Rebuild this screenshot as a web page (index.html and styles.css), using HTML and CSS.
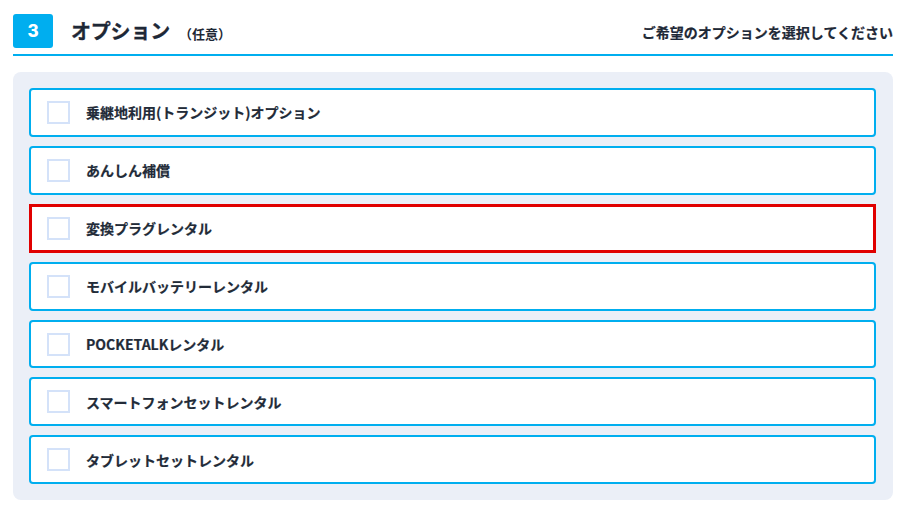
FILE: index.html
```html
<!DOCTYPE html>
<html lang="ja">
<head>
<meta charset="utf-8">
<title>オプション</title>
<link rel="stylesheet" href="styles.css">
</head>
<body>
<section class="step">
  <header class="step-head">
    <div class="step-title">
      <span class="badge">3</span>
      <h2 class="title">オプション</h2>
      <span class="optional">（任意）</span>
    </div>
    <p class="hint">ご希望のオプションを選択してください</p>
  </header>
  <div class="panel">
    <label class="opt"><span class="box"></span><span class="label">乗継地利用(トランジット)オプション</span></label>
    <label class="opt"><span class="box"></span><span class="label">あんしん補償</span></label>
    <label class="opt opt-error"><span class="box"></span><span class="label">変換プラグレンタル</span></label>
    <label class="opt"><span class="box"></span><span class="label">モバイルバッテリーレンタル</span></label>
    <label class="opt"><span class="box"></span><span class="label">POCKETALKレンタル</span></label>
    <label class="opt"><span class="box"></span><span class="label">スマートフォンセットレンタル</span></label>
    <label class="opt"><span class="box"></span><span class="label">タブレットセットレンタル</span></label>
  </div>
</section>
</body>
</html>
```

FILE: styles.css
```css
* { box-sizing: border-box; }
html, body { margin: 0; padding: 0; background: #ffffff; }
body {
  font-family: "Noto Sans CJK JP", "Noto Sans", sans-serif;
  color: #222b38;
}
.step {
  padding: 11px 16px 0 13px;
}
.step-head {
  display: flex;
  align-items: flex-start;
  justify-content: space-between;
  height: 45px;
  border-bottom: 2px solid #00aeef;
}
.step-title {
  display: flex;
  align-items: center;
}
.badge {
  width: 40px;
  height: 34px;
  border-radius: 3px;
  background: #00aeef;
  color: #ffffff;
  font-family: "Inter", "Roboto", sans-serif;
  font-weight: 800;
  font-size: 17px;
  display: flex;
  align-items: center;
  justify-content: center;
}
.title {
  margin: -1px 0 0 18px;
  font-size: 20px;
  font-weight: 700;
  line-height: 34px;
  color: #1e2836;
  letter-spacing: -0.2px;
  -webkit-text-stroke: 0.3px #1e2836;
}
.optional {
  margin: 6px 0 0 9px;
  font-size: 13px;
  font-weight: 700;
  line-height: 34px;
  color: #1e2836;
}
.hint {
  margin: 11px 0 0 0;
  font-size: 14px;
  font-weight: 700;
  line-height: 20px;
  color: #1e2836;
  -webkit-text-stroke: 0.2px #1e2836;
}
.panel {
  margin-top: 16px;
  background: #ebeff7;
  border-radius: 8px;
  padding: 16px 17px 16px 16px;
  display: flex;
  flex-direction: column;
  gap: 9px;
}
.opt {
  display: flex;
  align-items: center;
  gap: 16px;
  height: 48.9px;
  padding: 0 16px;
  background: #ffffff;
  border: 2px solid #00aeef;
  border-radius: 4px;
}
.opt-error {
  border: 3px solid #e00000;
  border-radius: 0;
  padding: 0 15px;
}
.box {
  flex: none;
  width: 23px;
  height: 23px;
  border: 2px solid #d4e2f9;
  background: #ffffff;
}
.label {
  font-size: 14px;
  font-weight: 700;
  color: #222b38;
  -webkit-text-stroke: 0.2px #222b38;
}
```
